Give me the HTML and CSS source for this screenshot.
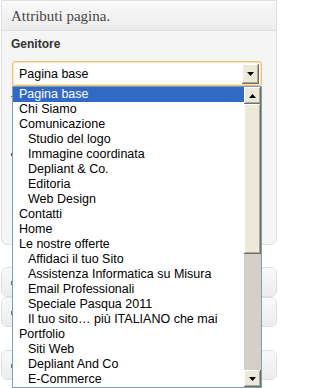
FILE: index.html
```html
<!DOCTYPE html>
<html lang="it">
<head>
<meta charset="utf-8">
<title>Attributi pagina</title>
<link rel="stylesheet" href="styles.css">
</head>
<body>
<div class="page">
  <div class="postbox open">
    <div class="hndle">Attributi pagina.</div>
    <div class="inside">
      <p class="label">Genitore</p>
      <div class="select focus">
        <span class="val">Pagina base</span>
        <span class="btn"><svg width="7" height="4" viewBox="0 0 7 4"><polygon points="0,0 7,0 3.5,4" fill="#000"/></svg></span>
      </div>
      <span class="mark m1"></span>
      <span class="mark m2"></span>
    </div>
  </div>
  <div class="postbox closed"><div class="hndle"><span class="mark"></span></div></div>
  <div class="postbox closed"><div class="hndle"><span class="mark"></span></div></div>
  <div class="postbox closed last"><div class="hndle"><span class="mark"></span></div></div>

  <div class="dropdown">
    <ul class="options">
      <li class="sel">Pagina base</li>
      <li>Chi Siamo</li>
      <li>Comunicazione</li>
      <li class="sub">Studio del logo</li>
      <li class="sub">Immagine coordinata</li>
      <li class="sub">Depliant &amp; Co.</li>
      <li class="sub">Editoria</li>
      <li class="sub">Web Design</li>
      <li>Contatti</li>
      <li>Home</li>
      <li>Le nostre offerte</li>
      <li class="sub">Affidaci il tuo Sito</li>
      <li class="sub">Assistenza Informatica su Misura</li>
      <li class="sub">Email Professionali</li>
      <li class="sub">Speciale Pasqua 2011</li>
      <li class="sub">Il tuo sito… più ITALIANO che mai</li>
      <li>Portfolio</li>
      <li class="sub">Siti Web</li>
      <li class="sub">Depliant And Co</li>
      <li class="sub">E-Commerce</li>
    </ul>
    <div class="scrollbar">
      <div class="sbtn"><svg width="7" height="4" viewBox="0 0 7 4"><polygon points="0,4 7,4 3.5,0" fill="#000"/></svg></div>
      <div class="thumb"></div>
      <div class="track"></div>
      <div class="sbtn"><svg width="7" height="4" viewBox="0 0 7 4"><polygon points="0,0 7,0 3.5,4" fill="#000"/></svg></div>
    </div>
  </div>
</div>
</body>
</html>
```

FILE: styles.css
```css
html, body {
  margin: 0;
  padding: 0;
  background: #fff;
}

body {
  font-family: "Liberation Sans", Arial, sans-serif;
  color: #333;
}

.page {
  position: relative;
  padding: 0 3px 0 1px;
  width: 280px;
  height: 388px;
  box-sizing: border-box;
  overflow: hidden;
}

.postbox {
  border: 1px solid #dfdfdf;
  background: #f5f5f5;
  box-sizing: border-box;
}

.postbox.open {
  border-radius: 0 0 6px 6px;
  height: 245px;
}

.postbox.closed {
  border-radius: 6px;
  height: 30px;
  overflow: hidden;
}

.postbox.open + .postbox.closed {
  margin-top: 22px;
}

.postbox.last {
  margin-top: 23px;
}

.hndle {
  box-sizing: content-box;
  height: 27px;
  padding: 2px 0 0 9px;
  line-height: 27px;
  font-family: "Liberation Serif", Georgia, serif;
  font-size: 15px;
  color: #464646;
  background: linear-gradient(#f9f9f9, #ececec);
  border-bottom: 1px solid #dfdfdf;
  white-space: nowrap;
}

.postbox.closed .hndle {
  border-bottom: 0;
  height: 26px;
  display: flex;
  align-items: center;
}

.inside {
  padding: 6px 0 0 9px;
  display: flex;
  flex-direction: column;
  align-items: flex-start;
}

.label {
  margin: 0;
  font-size: 12px;
  font-weight: bold;
  line-height: 14px;
  color: #333;
}

.select {
  margin: 10px 0 0 1px;
  width: 250px;
  height: 25px;
  box-sizing: border-box;
  border: 1px solid #7f9db9;
  background: #fff;
  display: flex;
  align-items: flex-start;
  justify-content: space-between;
  padding: 2px 2px 1px 6px;
  font-size: 12.5px;
  color: #000;
}

.select.focus {
  border-color: #efbf6e;
  border-radius: 3px;
  box-shadow: inset 0 0 0 1px #fbe6c2;
}

.select .val {
  line-height: 20px;
  white-space: nowrap;
}

.btn {
  width: 17px;
  height: 20px;
  box-sizing: border-box;
  background: #ece9d8;
  box-shadow: inset -1px -1px 0 #716f64, inset 1px 1px 0 #fff, inset -2px -2px 0 #aca899;
  display: flex;
  align-items: center;
  justify-content: center;
}

/* stray glyph edges of labels hidden behind the open list */
.mark {
  display: block;
  width: 2px;
  height: 2px;
  background: #555;
}

.inside .m1 {
  margin-top: 10px;
  height: 1px;
}

.inside .m2 {
  margin-top: 56px;
  height: 3px;
  width: 1px;
}

.postbox.closed .mark {
  width: 1px;
  height: 4px;
  background: #777;
}

/* open dropdown list overlay */
.dropdown {
  position: absolute;
  left: 12px;
  top: 86px;
  width: 250px;
  height: 302px;
  box-sizing: border-box;
  border: 1px solid #7f9db9;
  background: #fff;
  display: flex;
}

.options {
  list-style: none;
  margin: 0;
  padding: 0;
  flex: 1;
  font-size: 12.5px;
  color: #000;
}

.options li {
  height: 15px;
  line-height: 15px;
  padding-left: 6px;
  white-space: nowrap;
  overflow: hidden;
}

.options li.sub {
  padding-left: 15px;
}

.options li.sel {
  background: #316ac5;
  color: #fff;
}

.scrollbar {
  width: 17px;
  display: flex;
  flex-direction: column;
}

.sbtn {
  height: 17px;
  flex: none;
  background: #ece9d8;
  box-shadow: inset -1px -1px 0 #716f64, inset 1px 1px 0 #fff, inset -2px -2px 0 #aca899;
  display: flex;
  align-items: center;
  justify-content: center;
}

.thumb {
  height: 150px;
  flex: none;
  background: #ece9d8;
  box-shadow: inset -1px -1px 0 #716f64, inset 1px 1px 0 #fff, inset -2px -2px 0 #aca899;
}

.track {
  flex: 1;
  background: #d4d0c8;
}
```
